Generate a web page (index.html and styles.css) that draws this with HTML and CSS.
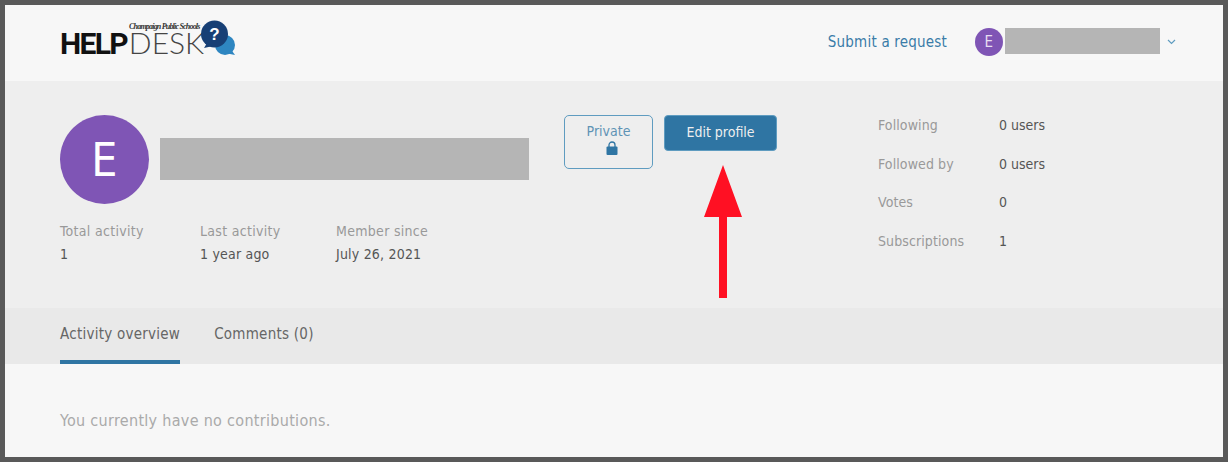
FILE: index.html
```html
<!DOCTYPE html>
<html lang="en">
<head>
    <meta charset="UTF-8">
    <title>Profile</title>
    <link rel="stylesheet" href="styles.css">
</head>
<body>
    <div class="frame">
        <header class="header">
            <div class="logo">
                <span class="logo-help">HELP</span><span class="logo-desk">DESK</span>
                <span class="logo-script">Champaign Public Schools</span>
                <svg class="logo-bubbles" width="36" height="36" viewBox="0 0 36 36">
                    <circle cx="24" cy="25" r="10" fill="#2e86c1"/>
                    <path d="M29 28l5 7-10-2z" fill="#2e86c1"/>
                    <circle cx="13.5" cy="14" r="13.5" fill="#173f75"/>
                    <path d="M6 23l-3 5 9-2z" fill="#173f75"/>
                    <text x="13.5" y="20" class="logo-mark">?</text>
                </svg>
            </div>
            <nav class="user-nav">
                <a class="request-link">Submit a request</a>
                <div class="user">
                    <span class="avatar-small">E</span>
                    <span class="redacted redacted-small"></span>
                    <svg class="chevron" width="9" height="6" viewBox="0 0 9 6"><path d="M1 1l3.5 3.5L8 1" fill="none" stroke="#5f9cc0" stroke-width="1.2"/></svg>
                </div>
            </nav>
        </header>

        <section class="profile">
            <div class="profile-main">
                <div class="profile-name">
                    <span class="avatar">E</span>
                    <span class="redacted redacted-large"></span>
                </div>
                <div class="activity">
                    <div class="activity-item activity-total"><span class="label">Total activity</span><span class="value">1</span></div>
                    <div class="activity-item activity-last"><span class="label">Last activity</span><span class="value">1 year ago</span></div>
                    <div class="activity-item"><span class="label">Member since</span><span class="value">July 26, 2021</span></div>
                </div>
            </div>
            <div class="profile-actions">
                <div class="private-badge">
                    Private
                    <svg class="lock" width="12" height="14" viewBox="0 0 12 14"><path d="M3 6.5V4a3 3 0 0 1 6 0v2.5" fill="none" stroke="#2f75a3" stroke-width="1.3"/><rect x="0.5" y="5.5" width="11" height="8.5" rx="1" fill="#2f75a3"/></svg>
                </div>
                <button class="edit-button">Edit profile</button>
            </div>
            <dl class="stats">
                <div class="stat"><dt>Following</dt><dd>0 users</dd></div>
                <div class="stat"><dt>Followed by</dt><dd>0 users</dd></div>
                <div class="stat"><dt>Votes</dt><dd>0</dd></div>
                <div class="stat"><dt>Subscriptions</dt><dd>1</dd></div>
            </dl>
        </section>

        <nav class="tabs">
            <a class="tab tab-active">Activity overview</a>
            <a class="tab">Comments (0)</a>
        </nav>

        <main class="content">You currently have no contributions.</main>

        <svg class="arrow" width="38" height="133" viewBox="0 0 38 133"><path d="M19 0L38 52H23V133H15V52H0z" fill="#ff1023"/></svg>
    </div>
</body>
</html>
```

FILE: styles.css
```css
* {
    box-sizing: border-box;
}

body {
    margin: 0;
    background-color: white;
    font-family: 'DejaVu Sans', sans-serif;
    font-stretch: condensed;
    font-size: 14px;
    letter-spacing: 0.3px;
}

.frame {
    position: relative;
    display: flex;
    flex-direction: column;
    width: 1228px;
    height: 462px;
    border: 5px solid #595959;
    background-color: #f7f7f7;
}

.header {
    display: flex;
    justify-content: space-between;
    align-items: center;
    height: 76px;
    padding: 0 47px 0 55px;
}

.logo {
    position: relative;
    display: flex;
    align-items: baseline;
    width: 176px;
    height: 30px;
    padding-top: 6px;
    margin-bottom: 6px;
    letter-spacing: 0;
    font-stretch: normal;
    color: #111;
}

.logo-help {
    font-family: 'Roboto', sans-serif;
    font-size: 30px;
    font-weight: bold;
    letter-spacing: -1.7px;
    line-height: 22px;
}

.logo-desk {
    margin-left: 2px;
    font-family: 'Lato', sans-serif;
    font-size: 30px;
    font-weight: 300;
    line-height: 22px;
    color: #444;
}

.logo-script {
    position: absolute;
    left: 69px;
    top: -3px;
    font-family: 'Liberation Serif', serif;
    font-style: italic;
    font-weight: bold;
    font-size: 8px;
    letter-spacing: -0.8px;
    line-height: 9px;
    color: #333;
    white-space: nowrap;
}

.logo-bubbles {
    position: absolute;
    left: 141px;
    top: -5px;
}

.logo-mark {
    font-family: 'Liberation Sans', sans-serif;
    font-size: 17px;
    font-weight: bold;
    fill: white;
    text-anchor: middle;
}

.user-nav {
    display: flex;
    align-items: center;
    gap: 28px;
    margin-bottom: 2px;
}

.request-link {
    color: #3a7ca8;
    font-size: 15px;
    letter-spacing: 0.2px;
}

.user {
    display: flex;
    align-items: flex-start;
}

.avatar-small {
    display: flex;
    align-items: center;
    justify-content: center;
    width: 28px;
    height: 28px;
    border-radius: 50%;
    background-color: #7f55b5;
    color: #e6def2;
    font-size: 15px;
}

.redacted {
    display: block;
    background-color: #b5b5b5;
}

.redacted-small {
    width: 155px;
    height: 26px;
    margin-left: 2px;
}

.chevron {
    margin: 11px 0 0 7px;
}

.profile {
    display: flex;
    height: 227px;
    padding: 34px 0 0 55px;
    background-color: #eeeeee;
}

.profile-main {
    width: 504px;
}

.profile-name {
    display: flex;
    align-items: flex-start;
    gap: 11px;
}

.avatar {
    display: flex;
    align-items: center;
    justify-content: center;
    width: 89px;
    height: 89px;
    border-radius: 50%;
    background-color: #7f55b5;
    color: white;
    font-size: 46px;
}

.redacted-large {
    width: 369px;
    height: 42px;
    margin-top: 23px;
}

.activity {
    display: flex;
    margin-top: 19px;
}

.activity-item {
    display: flex;
    flex-direction: column;
    gap: 7px;
}

.activity-total {
    width: 140px;
}

.activity-last {
    width: 136px;
}

.label {
    color: #999;
}

.value {
    color: #555;
    letter-spacing: 0.2px;
}

.profile-actions {
    display: flex;
    align-items: flex-start;
    gap: 11px;
    width: 314px;
}

.private-badge {
    display: flex;
    flex-direction: column;
    align-items: center;
    gap: 2px;
    width: 89px;
    height: 54px;
    padding-top: 7px;
    border: 1px solid #5f9cc0;
    border-radius: 5px;
    color: #5f93b5;
    letter-spacing: 0;
}

.lock {
    margin-left: 6px;
}

.edit-button {
    width: 113px;
    height: 36px;
    padding: 0 0 2px;
    border: 1px solid #5f9cc0;
    border-radius: 4px;
    background-color: #2f75a3;
    color: #eee;
    font: inherit;
    letter-spacing: 0;
}

.stats {
    margin: 2px 0 0;
}

.stat {
    display: flex;
    height: 38.5px;
}

.stat dt {
    width: 121px;
    color: #999;
    letter-spacing: 0.1px;
}

.stat dd {
    margin: 0;
    color: #555;
    letter-spacing: 0;
}

.tabs {
    display: flex;
    gap: 34px;
    height: 56px;
    padding-left: 55px;
    background-color: #e9e9e9;
}

.tab {
    padding-top: 17px;
    color: #666;
    font-size: 15px;
    letter-spacing: 0.25px;
}

.tab-active {
    border-bottom: 4px solid #2f75a3;
}

.content {
    padding: 47px 0 0 55px;
    color: #aaa;
    font-size: 16px;
}

.arrow {
    position: absolute;
    left: 699px;
    top: 160px;
}
```
